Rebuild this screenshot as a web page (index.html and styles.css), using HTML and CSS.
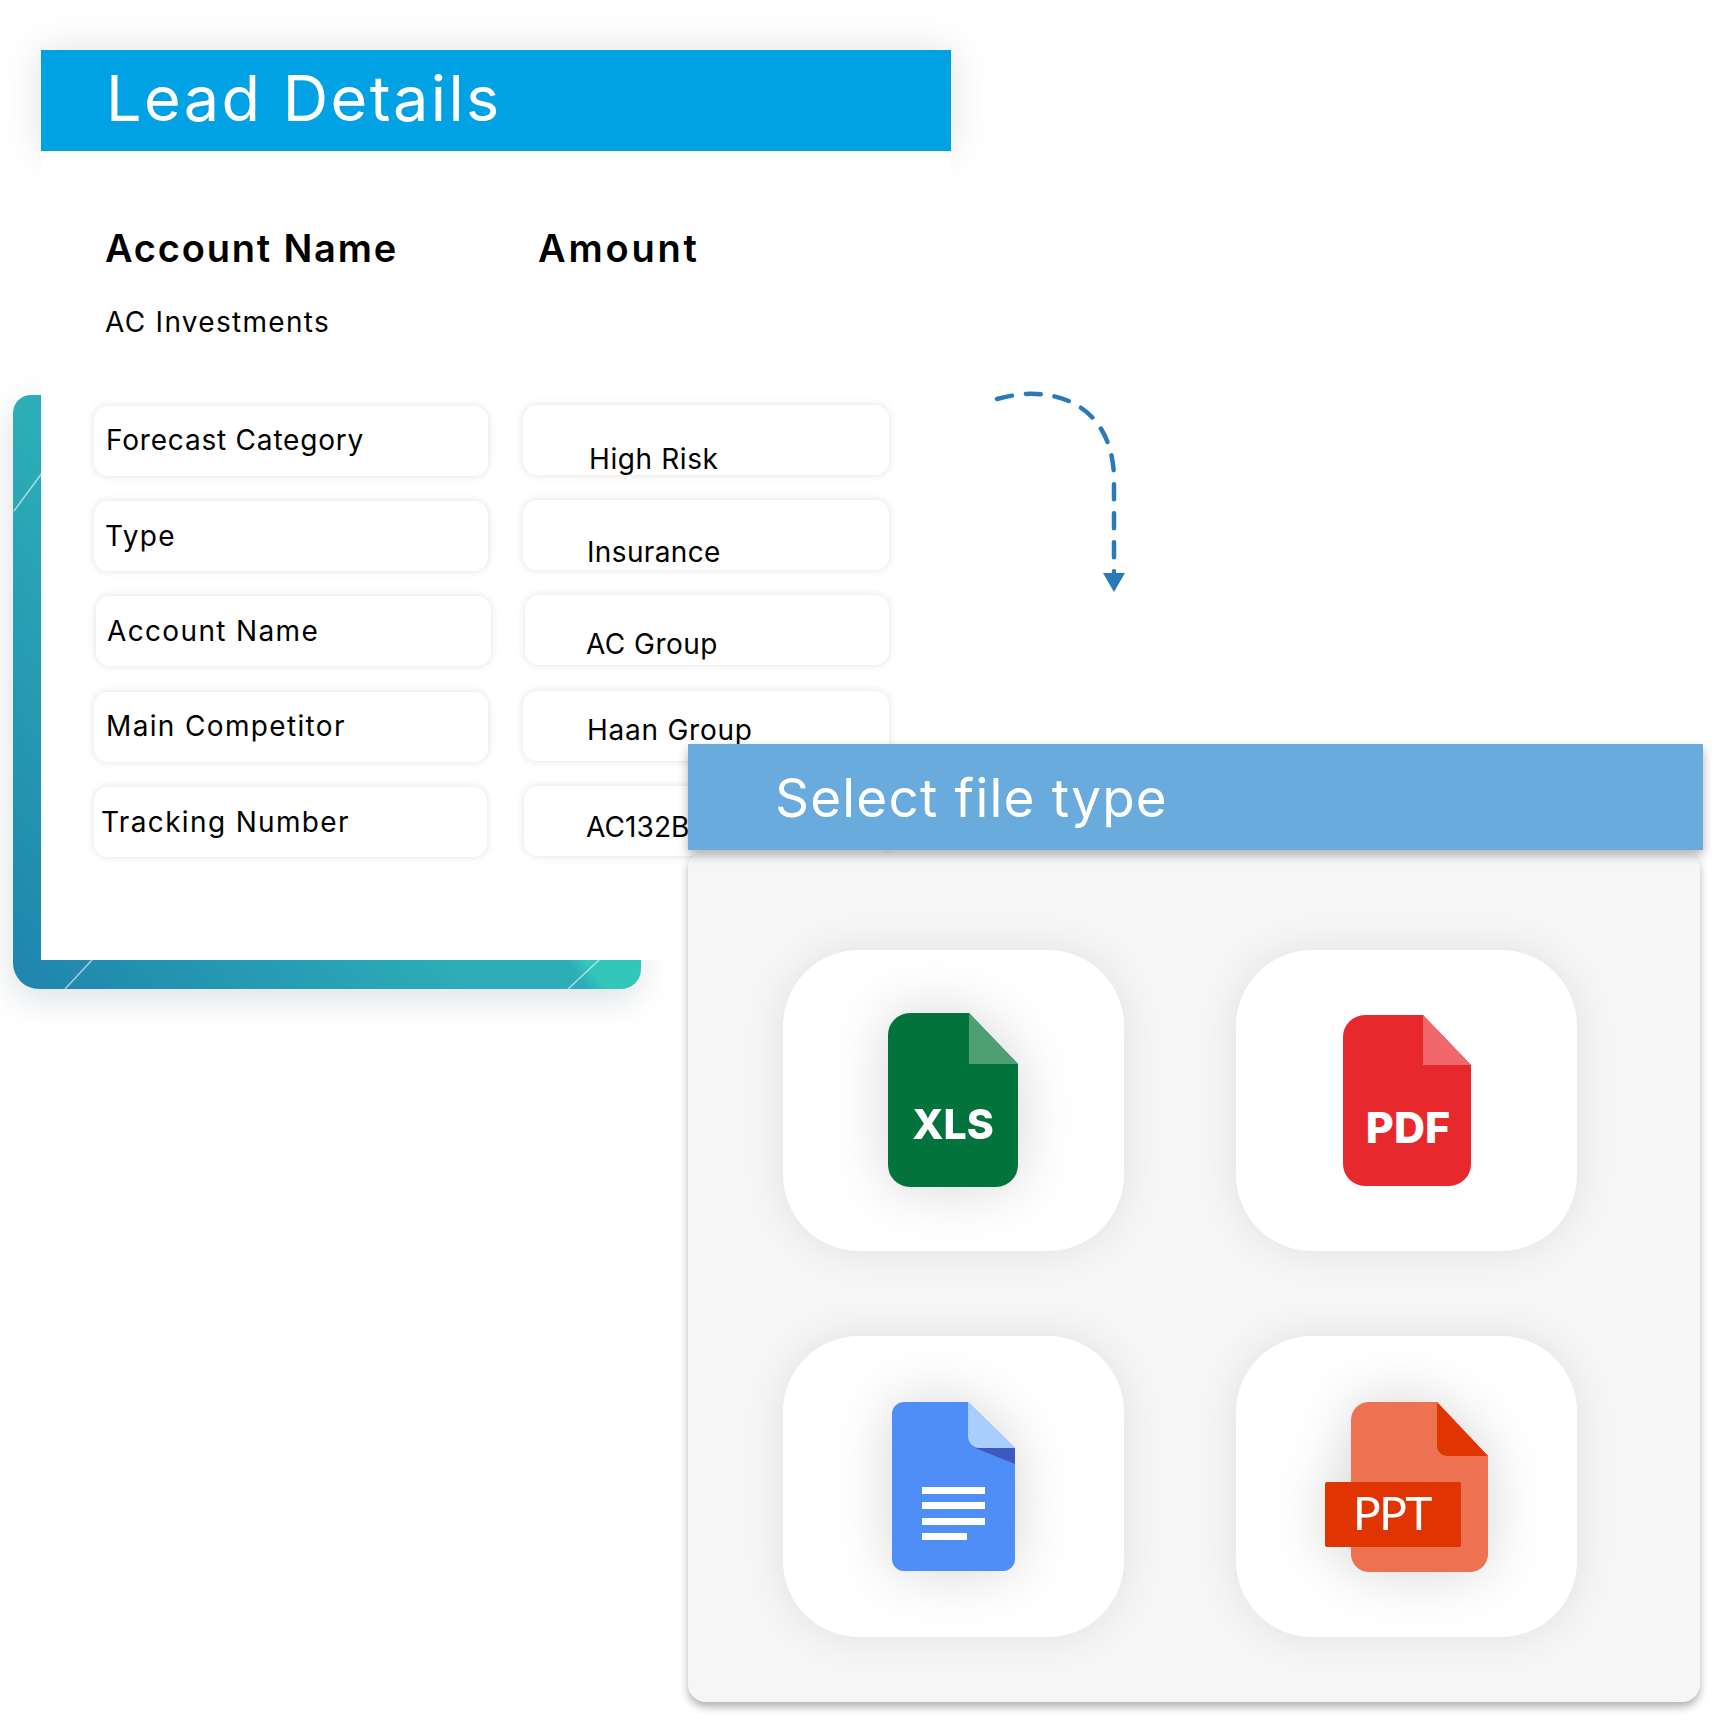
FILE: index.html
```html
<!DOCTYPE html>
<html lang="en">
<head>
    <meta charset="UTF-8">
    <meta name="viewport" content="width=device-width, initial-scale=1.0">
    <title>Lead Details</title>
    <link rel="stylesheet" href="styles.css">
</head>
<body>
    <!-- teal corner that sits behind the lead card -->
    <div class="frame">
        <svg class="frame-lines" width="628" height="594" viewBox="0 0 628 594">
            <path d="M29 78 L1 116"></path>
            <path d="M79 565 L52 594"></path>
            <path d="M586 565 L555 594"></path>
        </svg>
    </div>

    <section class="lead">
        <h1 class="lead-head">Lead Details</h1>
        <div class="lead-body">
            <div class="summary">
                <h2 class="summary-name">Account Name</h2>
                <h2 class="summary-amount">Amount</h2>
            </div>
            <p class="account">AC Investments</p>
            <div class="fields">
                <div class="col">
                    <div class="field f-forecast">Forecast Category</div>
                    <div class="field f-type">Type</div>
                    <div class="field f-account">Account Name</div>
                    <div class="field f-main">Main Competitor</div>
                    <div class="field f-track">Tracking Number</div>
                </div>
                <div class="col col-values">
                    <div class="field value v-risk">High Risk</div>
                    <div class="field value v-ins">Insurance</div>
                    <div class="field value v-group">AC Group</div>
                    <div class="field value v-haan">Haan Group</div>
                    <div class="field value v-code">AC132B</div>
                </div>
            </div>
        </div>
    </section>

    <svg class="arrow" width="140" height="205" viewBox="985 390 140 205">
        <path class="arrow-line" d="M996 399 Q1018 393 1035 394 C1085 396 1113 430 1113 480 V572"></path>
        <path class="arrow-tip" d="M1102 573 H1124 L1113 592z"></path>
    </svg>

    <section class="picker">
        <h2 class="picker-head">Select file type</h2>
        <div class="picker-body">
            <div class="card">
                <svg class="icon icon-xls" width="130" height="174" viewBox="0 0 130 174">
                    <path fill="#02733c" d="M22 0 H81 L130 51 V152 a22 22 0 0 1 -22 22 H22 a22 22 0 0 1 -22 -22 V22 a22 22 0 0 1 22 -22z"></path>
                    <path fill="#4f9f75" d="M81 0 L130 51 H81z"></path>
                    <text class="icon-label" x="65" y="126" font-size="41">XLS</text>
                </svg>
            </div>
            <div class="card">
                <svg class="icon icon-flat" width="128" height="171" viewBox="0 0 128 171">
                    <path fill="#e7282c" d="M22 0 H80 L128 50 V149 a22 22 0 0 1 -22 22 H22 a22 22 0 0 1 -22 -22 V22 a22 22 0 0 1 22 -22z"></path>
                    <path fill="#f0686c" d="M80 0 L128 50 H80z"></path>
                    <text class="icon-label" x="65" y="128" font-size="43">PDF</text>
                </svg>
            </div>
            <div class="card">
                <svg class="icon" width="123" height="169" viewBox="0 0 123 169">
                    <path fill="#4f8ef7" d="M12 0 H76 L123 46 V157 a12 12 0 0 1 -12 12 H12 a12 12 0 0 1 -12 -12 V12 a12 12 0 0 1 12 -12z"></path>
                    <path fill="#3d58bf" d="M83 46 H123 V62z"></path>
                    <path fill="#a9cdfd" d="M76 0 L123 46 H88 a12 12 0 0 1 -12 -12z"></path>
                    <path fill="#fff" d="M30 85 H93 V92 H30z M30 100 H93 V107 H30z M30 116 H93 V123 H30z M30 131 H75 V138 H30z"></path>
                </svg>
            </div>
            <div class="card">
                <svg class="icon" width="163" height="170" viewBox="0 0 163 170">
                    <path fill="#ec7251" d="M44 0 H112 L163 54 V152 a18 18 0 0 1 -18 18 H44 a18 18 0 0 1 -18 -18 V18 a18 18 0 0 1 18 -18z"></path>
                    <path fill="#e03502" d="M112 0 L163 54 H122 a10 10 0 0 1 -10 -10z"></path>
                    <rect fill="#e03502" x="0" y="80" width="136" height="65" rx="2"></rect>
                    <text class="icon-label icon-label-thin" x="67" y="128" font-size="46">PPT</text>
                </svg>
            </div>
        </div>
    </section>
</body>
</html>
```

FILE: styles.css
```css
* {
    box-sizing: border-box;
}

body {
    margin: 0;
    position: relative;
    width: 1736px;
    height: 1730px;
    overflow: hidden;
    background-color: #fff;
    color: #000;
    font-family: 'Inter', 'Liberation Sans', sans-serif;
}

h1, h2, p {
    margin: 0;
    font-weight: 400;
}

/* teal corner */
.frame {
    position: absolute;
    left: 13px;
    top: 395px;
    width: 628px;
    height: 594px;
    border-radius: 18px 0 20px 26px;
    background: linear-gradient(52deg, #1f84ad 0%, #2cadb7 42%, #2cadb7 52.5%, #33c7ba 54.5%);
    box-shadow: -2px 10px 34px rgba(0, 40, 70, 0.14);
}

.frame-lines {
    display: block;
}

.frame-lines path {
    fill: none;
    stroke: rgba(255, 255, 255, 0.6);
    stroke-width: 1.5;
}

/* lead card */
.lead {
    position: relative;
    width: 910px;
    margin: 50px 0 0 41px;
}

.lead-head {
    display: flex;
    align-items: center;
    height: 101px;
    padding: 0 0 6px 65px;
    background-color: #00a2e3;
    box-shadow: 0 0 40px rgba(0, 0, 0, 0.12);
    color: #fff;
    font-size: 63px;
    letter-spacing: 2.4px;
}

.lead-body {
    position: relative;
    height: 809px;
    padding-top: 75px;
    background-color: #fff;
}

.summary {
    display: flex;
    padding-left: 64px;
}

.summary h2 {
    font-size: 38px;
    font-weight: 600;
    line-height: 44px;
    letter-spacing: 1.8px;
}

.summary .summary-amount {
    letter-spacing: 2.8px;
}

.summary-name {
    width: 433px;
}

.account {
    margin: 35px 0 67px 64px;
    font-size: 28px;
    line-height: 34px;
    letter-spacing: 1.3px;
}

.fields {
    display: flex;
    gap: 35px;
    padding-left: 53px;
}

.col {
    display: flex;
    flex-direction: column;
    gap: 25.2px;
    width: 394px;
}

.col-values {
    width: 366px;
    margin-top: -1px;
}

.field {
    display: flex;
    align-items: center;
    height: 70px;
    padding-left: 12px;
    border-radius: 14px;
    background-color: #fff;
    box-shadow: 0 0 8px rgba(0, 0, 0, 0.12);
    font-size: 28px;
    letter-spacing: 1.35px;
    white-space: nowrap;
}

.f-forecast { padding-bottom: 2px; letter-spacing: 0.8px; }
.f-type { padding-left: 11px; }
.f-account { margin: 0 -3px 0 2px; padding-left: 11px; }
.f-main { padding-bottom: 1px; }
.f-track { padding-left: 7px; margin-right: 1px; }

.value { padding-left: 66px; letter-spacing: 0.6px; }
.v-risk { padding-top: 38px; }
.v-ins { padding-left: 64px; padding-top: 33px; letter-spacing: 0.35px; }
.v-group { margin: 0 0 0 2px; padding-left: 61px; padding-top: 27px; letter-spacing: 0.45px; }
.v-haan { padding-left: 64px; padding-top: 8px; letter-spacing: 0.75px; }
.v-code { margin-left: 1px; padding-left: 62px; padding-top: 12px; letter-spacing: 0.1px; }

/* dashed arrow */
.arrow {
    position: absolute;
    left: 986px;
    top: 390px;
}

.arrow-line {
    fill: none;
    stroke: #2a7ab8;
    stroke-width: 4.5;
    stroke-linecap: round;
    stroke-dasharray: 15 14;
}

.arrow-tip {
    fill: #2a7ab8;
}

/* file type picker, lies over the lead card */
.picker {
    position: absolute;
    left: 688px;
    top: 744px;
    width: 1015px;
}

.picker-head {
    position: relative;
    display: flex;
    align-items: center;
    height: 106px;
    padding: 2px 0 0 87px;
    background-color: #6aabdd;
    box-shadow: 0 5px 10px rgba(0, 0, 0, 0.3);
    color: #fff;
    font-size: 53px;
    letter-spacing: 1.2px;
}

.picker-body {
    display: grid;
    grid-template-columns: 341px 341px;
    grid-template-rows: 301px 301px;
    column-gap: 112px;
    row-gap: 85px;
    width: 1012px;
    height: 849px;
    margin-top: 3px;
    padding: 97px 0 0 95px;
    border-radius: 14px 14px 18px 18px;
    background-color: #f6f6f6;
    box-shadow: 0 5px 9px rgba(0, 0, 0, 0.3);
}

.card {
    display: flex;
    align-items: center;
    justify-content: center;
    border-radius: 76px;
    background-color: #fff;
    box-shadow: 0 0 40px rgba(0, 0, 0, 0.09);
}

.icon {
    filter: drop-shadow(0 0 28px rgba(0, 0, 0, 0.16));
}

.icon-xls {
    margin: 0 2px 2px 0;
}

.icon-flat {
    filter: none;
}

.icon-label {
    fill: #fff;
    font-family: 'Inter', 'Liberation Sans', sans-serif;
    font-weight: 800;
    text-anchor: middle;
}

.icon-label-thin {
    font-family: 'Lato', sans-serif;
    font-weight: 400;
    letter-spacing: -1.5px;
}
```
